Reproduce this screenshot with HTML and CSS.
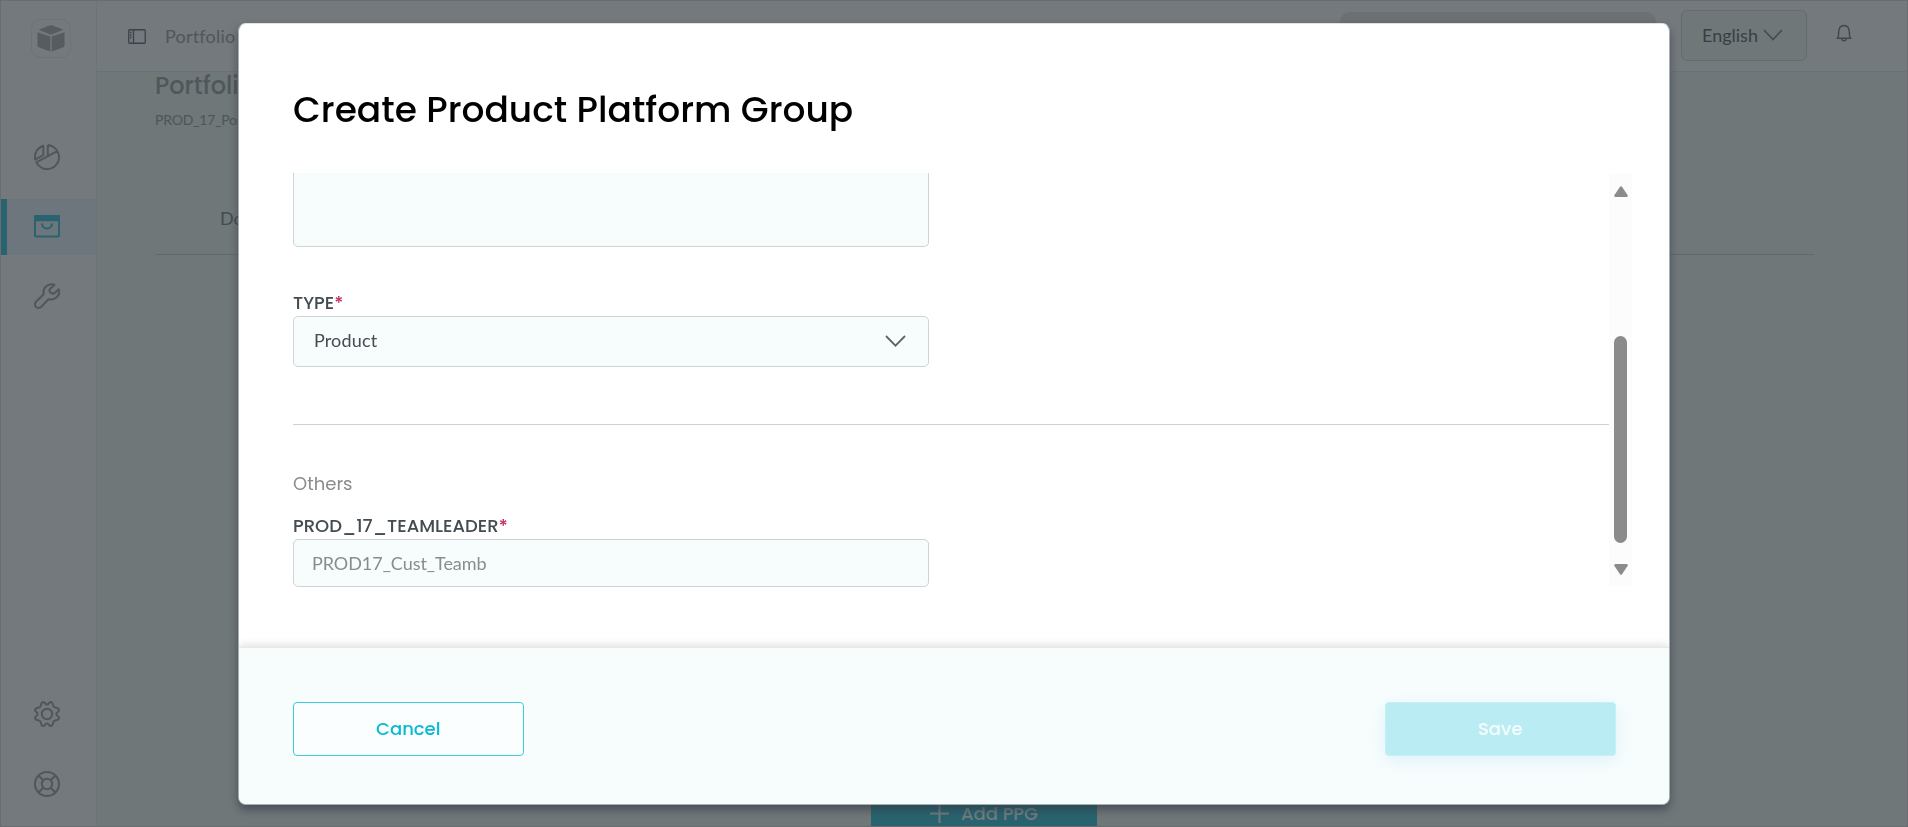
FILE: index.html
```html
<!DOCTYPE html>
<html lang="en">
<head>
<meta charset="utf-8">
<title>Create Product Platform Group</title>
<link rel="stylesheet" href="styles.css">
</head>
<body>
<div class="app">
  <nav class="sidebar">
    <div class="logo">
      <svg width="40" height="39" viewBox="0 0 40 39"><rect class="logo-frame" x=".5" y=".5" width="39" height="38" rx="9"/><path class="logo-cube" d="M7.500 10.800 18.500 6.600q1.500-.5 3 0L32.500 10.800 20 15.800zM6.500 13.200 19.300 17.600V32.600L7.700 28.200q-1.200-.5-1.200-1.800zM33.500 13.200 20.700 17.600V32.600L32.300 28.200q1.200-.5 1.200-1.800z"/></svg>
    </div>
    <div class="nav-item first"><svg width="26" height="26" viewBox="0 0 26 26"><path d="M13.800 1.100A12 12 0 1 1 2.300 18.400L23.800 6.800M13.800 1.100V12.200M9.300 1.700V11.200L1.200 15.600A12 12 0 0 1 9.300 1.700z"/></svg></div>
    <div class="nav-item active"><svg width="26" height="23" viewBox="0 0 26 23"><rect x="1" y="1.300" width="24" height="20.200" rx="1.500"/><path class="solid" d="M1 1h24v4.300H1z"/><path d="M8 8.500a5 5 0 0 0 10 0"/></svg></div>
    <div class="nav-item tools"><svg width="26" height="26" viewBox="0 0 26 26"><path d="M20.500 1.700C15 -.2 8.200 4 9.700 11.300L2 18.700a3.500 3.500 0 0 0 5.200 5.200L14.500 16.200C21 18 27 12 24.700 6.200L20.800 9.900Q18.500 11.500 16.600 9.500 14.500 7.500 16.400 5.400z"/></svg></div>
    <div class="nav-spacer"></div>
    <div class="nav-item"><svg width="26" height="26" viewBox="0 0 26 26"><circle cx="13" cy="13" r="5.200"/><path d="M13 3.600C15 3.600 15 1 16.500 1 19.500 1 18.500 5 20 6 21.500 7.300 25 6 25 9.300 25 11 22.300 11 22.300 13S25 15 25 16.700C25 20 21.500 18.700 20 20 18.500 21.300 19.500 25 16.500 25 15 25 15 22.400 13 22.400S11 25 9.500 25C6.500 25 7.500 21.300 6 20 4.500 18.700 1 20 1 16.700 1 15 3.700 15 3.700 13S1 11 1 9.300C1 6 4.500 7.300 6 6 7.500 5 6.500 1 9.500 1 11 1 11 3.600 13 3.600z"/></svg></div>
    <div class="nav-item last"><svg width="26" height="26" viewBox="0 0 26 26"><circle cx="13" cy="13" r="12"/><circle cx="13" cy="13" r="5.200"/><path d="M4.500 4.500 9.300 9.300M21.500 4.500 16.700 9.300M4.500 21.500 9.300 16.700M21.500 21.500 16.700 16.700"/></svg></div>
  </nav>
  <div class="content">
    <header class="topbar">
      <svg class="panel-icon" width="18" height="15" viewBox="0 0 18 15"><rect x=".75" y=".75" width="16.500" height="13.500" rx="1"/><path d="M5.500 1v13M2 3.500h1.500M2 6h1.500M2 8.500h1.500"/></svg>
      <span class="crumb">Portfolio</span>
      <div class="search"></div>
      <div class="language"><span class="language-name">English</span><svg width="20" height="12" viewBox="0 0 20 12"><path d="M1 1 10 10.500 19 1"/></svg></div>
      <svg class="bell" width="16" height="18" viewBox="0 0 16 18"><path d="M1.500 14.300h13q-1.200-1.500-1.200-6C13.300 4 11.500 1.500 8 1.500S2.700 4 2.700 8.300q0 4.500-1.200 6zM5.800 14.500a2.200 2.200 0 0 0 4.400 0"/></svg>
    </header>
    <main class="page">
      <h2 class="page-title">Portfolio</h2>
      <p class="page-sub">PROD_17_Portfolio</p>
      <div class="tabs"><span>Documents</span></div>
      <button class="add"><svg width="19" height="19" viewBox="0 0 19 19"><path d="M9.500 0v19M0 9.500h19"/></svg><span>Add PPG</span></button>
    </main>
  </div>
</div>
<div class="overlay">
  <section class="modal">
    <div class="modal-main">
      <h1 class="modal-title">Create Product Platform Group</h1>
      <div class="scroller">
        <form class="fields">
          <div class="textarea"></div>
          <label class="label label-type"><span>TYPE</span><b>*</b></label>
          <div class="select"><span>Product</span><svg width="21" height="12" viewBox="0 0 21 12"><path d="M1 1 10.500 10.700 20 1"/></svg></div>
          <div class="rule"></div>
          <div class="group-name">Others</div>
          <label class="label label-leader"><span>PROD_17_TEAMLEADER</span><b>*</b></label>
          <div class="input"><span>PROD17_Cust_Teamb</span></div>
        </form>
        <div class="scrollbar">
          <svg width="14" height="11" viewBox="0 0 14 11"><path d="M6 .8q1-1.200 2 0L13.700 9.200Q14 11 12.500 11H1.500Q0 11 .3 9.200z"/></svg>
          <div class="thumb"></div>
          <svg width="14" height="11" viewBox="0 0 14 11"><path d="M6 10.200q1 1.200 2 0L13.700 1.800Q14 0 12.500 0H1.500Q0 0 .3 1.800z"/></svg>
        </div>
      </div>
    </div>
    <footer class="modal-footer">
      <button class="btn cancel">Cancel</button>
      <button class="btn save">Save</button>
    </footer>
  </section>
</div>
</body>
</html>
```

FILE: styles.css
```css
* { box-sizing: border-box; }
body { margin: 0; height: 827px; overflow: hidden; font-family: Lato, sans-serif; font-size: 18px; color: #444b51; }
h1, h2, p { margin: 0; font-weight: 500; }
svg { display: block; flex: none; fill: none; }
button { font: inherit; }

.app { display: flex; height: 827px; background: #6f7779; }
.sidebar { width: 97px; flex: none; display: flex; flex-direction: column; background: #73797d; border-right: 1px solid #6d7477; }
.logo { height: 128px; padding: 19px 0 0 31px; }
.logo-frame { stroke: #6d7376; }
.logo-cube { fill: #565c60; }
.nav-item { height: 56px; margin-bottom: 14px; padding-left: 34px; display: flex; align-items: center; }
.nav-item svg { stroke: #50575b; stroke-width: 2; stroke-linejoin: round; }
.nav-item.first { margin-top: 1px; }
.nav-item.active { margin-left: 1px; padding: 0 0 2px 27px; background: #6d767d; border-left: 6px solid #28636f; }
.nav-item.tools { padding-bottom: 2px; }
.nav-item.active svg { stroke: #28636f; }
.nav-item .solid { fill: #28636f; }
.nav-spacer { flex: 1; }
.nav-item.last { margin-bottom: 15px; }

.content { flex: 1; min-width: 0; }
.topbar { height: 72px; display: flex; align-items: center; background: #73797d; border-bottom: 1px solid #6b7275; }
.panel-icon { margin: 2px 19px 0 31px; stroke: #3a424b; stroke-width: 1.3; }
.crumb { width: 80px; font-size: 18px; color: #50565a; letter-spacing: .2px; }
.search { align-self: flex-start; width: 316px; height: 48px; margin: 12px 25px 0 auto; border-radius: 10px; background: #6a7073; }
.language { width: 126px; height: 51px; display: flex; align-items: center; gap: 4px; padding: 0 0 1px 20px; background: #6f7779; border: 1px solid #646b6e; border-radius: 6px; color: #373f45; }
.language-name { width: 57px; }
.language svg { stroke: #454c50; stroke-width: 1.7; }
.bell { margin: -6px 56px 0 29px; stroke: #41484c; stroke-width: 1.4; }
.page { padding: 0 94px 0 58px; }
.page-title { height: 38px; font: 500 24px/28px Poppins, Inter, sans-serif; color: #50575a; }
.page-sub { font-size: 14px; line-height: 20px; letter-spacing: -.25px; color: #50575a; }
.tabs { height: 125px; padding: 77px 0 0 65px; border-bottom: 1px solid #62686b; font-size: 18px; line-height: 22px; }
.add { width: 226px; height: 56px; margin: 530px 0 0 716px; padding: 0; display: flex; align-items: center; justify-content: center; gap: 12px; border: 0; background: #28636f; color: #737d80; font: 500 18px Poppins, Inter, sans-serif; }
.add svg { stroke: #737d80; stroke-width: 2; }

.overlay { position: fixed; inset: 0; border: 1px solid #676d70; padding: 22px 237px; }
.modal { width: 1432px; height: 782px; overflow: hidden; display: flex; flex-direction: column; border: 1px solid #a9aeb0; border-top-color: #dfe1e2; border-radius: 8px; background: #fff; box-shadow: 0 5px 8px rgba(50, 55, 65, .6); }
.modal-main { height: 623px; padding: 62px 37px 0 54px; }
.modal-title { height: 87px; font: 500 36px/48px Poppins, Inter, sans-serif; color: #000; white-space: nowrap; }
.scroller { height: 413px; display: flex; }
.fields { width: 1316px; }
.textarea, .select, .input { width: 636px; border: 1px solid #cfd3d4; border-radius: 5px; background: #f7fdfd; }
.textarea { height: 74px; border-top: 0; border-radius: 0 0 5px 5px; }
.label { display: flex; font: 500 18px/24px Poppins, Inter, sans-serif; }
.label b { color: #c62a5c; font-weight: 500; }
.label-type { height: 69px; padding-top: 44px; }
.select { height: 51px; display: flex; align-items: center; justify-content: space-between; padding: 0 22px 3px 20px; letter-spacing: .15px; }
.select svg { margin-top: 2px; stroke: #5f6467; stroke-width: 1.8; }
.rule { height: 1px; margin-top: 57px; background: #ced0d1; }
.group-name { height: 83px; padding-top: 46px; font: 400 18px/26px Poppins, Inter, sans-serif; color: #8b8b8b; }
.label-leader { height: 31px; padding-top: 6px; }
.input { height: 48px; padding-left: 18px; display: flex; align-items: center; color: #888c8d; letter-spacing: -.05px; }
.scrollbar { width: 23px; padding: 13px 5px 10px; display: flex; flex-direction: column; background: #fcfcfc; }
.scrollbar svg { fill: #8b8b8b; }
.thumb { width: 13px; height: 207px; margin: 139px 0 21px; border-radius: 7px; background: #8b8b8b; }
.modal-footer { flex: 1; display: flex; justify-content: space-between; align-items: flex-start; padding: 54px 53px 0 53.5px; background: #f7fdfd; border-top: 1px solid #eee6e6; box-shadow: 0 -2px 8px rgba(0, 0, 0, .13); }
.btn { width: 231.500px; height: 53.500px; padding: 0 0 1px; border-radius: 4px; font: 500 18px Poppins, Inter, sans-serif; }
.cancel { border: 1px solid #3fcbdc; background: #fafefe; color: #0bb9d2; }
.save { border: 1px solid #c4f1f5; background: #b9edf3; color: #f6fdfd; box-shadow: 0 5px 18px rgba(90, 170, 230, .14); }
```
